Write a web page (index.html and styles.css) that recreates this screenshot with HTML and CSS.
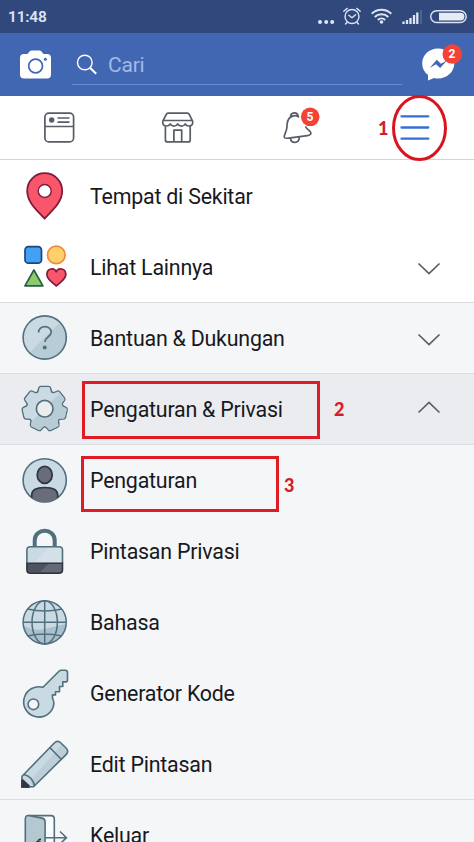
FILE: index.html
```html
<!DOCTYPE html>
<html lang="id">
<head>
<meta charset="utf-8">
<title>Menu</title>
<link rel="stylesheet" href="styles.css">
</head>
<body>
<div class="screen">
  <header class="status">
    <span class="clock">11:48</span>
    <svg class="status-icons" width="174" height="33" viewBox="300 0 174 33" fill="none" stroke="#dce5f4">
      <g fill="#dce5f4" stroke="none"><circle cx="320" cy="22" r="2"/><circle cx="326.2" cy="22" r="2"/><circle cx="332.2" cy="22" r="2"/></g>
      <g stroke-width="1.4" stroke-linecap="round" stroke-linejoin="round"><circle cx="352" cy="16.5" r="7"/><path d="M348.8 15.3l3.2 2.4 3.6-3M343.8 11.2l3.4-2.8M360.2 11.2l-3.4-2.8M347 22.5l-1.5 1.6M357 22.5l1.5 1.6"/></g>
      <g stroke-width="2"><path d="M371.7 13.8a14 14 0 0 1 19.6 0M374.7 17a9.7 9.7 0 0 1 13.6 0M377.8 20a5.4 5.4 0 0 1 7.4 0"/></g>
      <circle cx="381.5" cy="22" r="1.8" fill="#dce5f4" stroke="none"/>
      <path d="M403.5 24v-2.5M407 24v-4M410.5 24v-6M414 24v-9M417.3 24v-11.500" stroke-width="2.3"/>
      <path d="M421 24v-14" stroke="#536b9c" stroke-width="1.5"/>
      <rect x="430.700" y="10.700" width="35.500" height="11.800" rx="5.900" stroke-width="1.400"/>
      <path d="M439 12.700h21.500a3.900 3.900 0 0 1 0 7.800H439z" fill="#e6ecf6" stroke="none"/>
    </svg>
  </header>

  <div class="topbar">
    <svg class="camera" width="72" height="63" viewBox="0 33 72 63">
      <path d="M24 54h3.500l2-2.500q.8-.9 2-.9h8q1.200 0 2 .9l2 2.500H47q4 0 4 4v16.500q0 4-4 4H24q-4 0-4-4V58q0-4 4-4z" fill="#fff"/>
      <circle cx="35.600" cy="66" r="6.900" fill="none" stroke="#4267b2" stroke-width="1.700"/><circle cx="45.400" cy="59.300" r="1.500" fill="#4267b2"/>
    </svg>
    <div class="search">
      <svg width="36" height="51" viewBox="72 33 36 51" fill="none" stroke="#fff"><circle cx="84.800" cy="62.500" r="7.300" stroke-width="1.400"/><path d="M90 67.800l6.200 6" stroke-width="2.100"/></svg>
      <span>Cari</span>
    </div>
    <svg class="messenger" width="72" height="63" viewBox="402 33 72 63">
      <path d="M438 48.500c9 0 16.300 6.600 16.300 14.900S447 78.400 438 78.400q-2 0-4-.5l-6 2.500v-5.500c-3.600-2.700-5.800-6.800-5.800-11.500 0-8.300 7-14.900 15.800-14.900z" fill="#fff"/>
      <path d="M429.600 68l7.200-8.200 4.100 3.900 6-3.300-6.700 7.700-4.200-3.900z" fill="#4267b2"/>
      <circle cx="452.300" cy="54" r="9.800" fill="#f44336"/>
    </svg>
    <span class="badge badge-messages">2</span>
  </div>

  <nav class="tabs">
    <svg width="118" height="63" viewBox="0 96 118 63" fill="none" stroke="#575c65" stroke-width="1.700"><rect x="44.900" y="113.200" width="28.700" height="28.700" rx="4"/><path d="M45 126.500h28.500M57.500 118h12M57.500 122.200h12"/><circle cx="51.700" cy="120" r="2.700" fill="#575c65" stroke="none"/></svg>
    <svg width="119" height="63" viewBox="118 96 119 63" fill="none" stroke="#575c65" stroke-width="1.700" stroke-linejoin="round"><path d="M168 113.200h19.500q1.300 0 1.700 1.200l3.500 7q.3 4.600-3.800 4.600-2.600 0-3.700-2.100-1.200 2.300-3.800 2.300t-3.700-2.300q-1.200 2.300-3.800 2.300t-3.700-2.300q-1.100 2.100-3.700 2.100-4 0-3.800-4.600l3.600-7q.4-1.200 1.700-1.200zM163 120.500h29.500M165.400 126v13.900q0 2 2 2h20.800q2 0 2-2V126M173.900 141.500v-11.300h7.800v11.300"/></svg>
    <svg width="118" height="63" viewBox="237 96 118 63" fill="none" stroke="#575c65" stroke-width="1.700" stroke-linecap="round" stroke-linejoin="round"><path d="M298.500 116.800c-2.300-1.600-5.800-1.300-8.400.7-3.200 2.400-3.100 6.500-3.200 10-.2 4.200-3.400 7.500-2.500 10 .6 1.400 3.500.7 6 .4l17-2.300c3-.4 4.500-1.900 2.900-3.900-1.500-1.800-3.500-2.400-4.600-4.700M290.500 116.500c.5-4.400 6.300-5 7.500-1M290.500 138.500c.2 5.400 8.500 5 8.700-.8"/><circle cx="310.200" cy="116.800" r="9.300" fill="#f44336" stroke="none"/></svg>
    <svg width="119" height="63" viewBox="355 96 119 63" stroke="#3470d4" stroke-width="2.300" stroke-linecap="round"><path d="M401.500 116.300h26.800M401.500 127.500h26.800M401.500 138.700h26.800"/></svg>
    <span class="badge badge-alerts">5</span>
  </nav>

  <main class="menu">
    <div class="row plain">
      <svg class="icon" viewBox="0 160 90 71"><path d="M44.600 218.600C37.700 211 27.200 202.500 27.200 191a17.500 17.800 0 0 1 35 0c0 11.500-10.500 20-17.600 27.600z" fill="#f8566b" stroke="#801b3b" stroke-width="1.800" stroke-linejoin="round"/><circle cx="44.700" cy="191" r="6.500" fill="#fff" stroke="#801b3b" stroke-width="1.400"/></svg>
      <span>Tempat di Sekitar</span>
    </div>
    <div class="row plain">
      <svg class="icon" viewBox="0 231 90 71" stroke-width="1.700" stroke-linejoin="round"><rect x="25" y="246.700" width="16.500" height="16.500" rx="3.500" fill="#42a0f5" stroke="#1d477b"/><circle cx="56.300" cy="254.900" r="8.800" fill="#ffd06b" stroke="#ef8c3c"/><path d="M33.900 270l9 15.800h-18z" fill="#8cca6b" stroke="#285f43"/><path d="M56.200 286C52 282 46.900 279.500 46.900 274.500c0-6.500 7.500-7.300 9.300-2.700 1.800-4.600 9.600-3.800 9.600 2.700 0 5-5.400 7.500-9.600 11.500z" fill="#f8566b" stroke="#801b3b"/></svg>
      <span>Lihat Lainnya</span>
      <svg class="chevron" viewBox="0 0 24 14"><path d="M1.500 1.500L12 11.500 22.500 1.500"/></svg>
    </div>
    <div class="row line">
      <svg class="icon" viewBox="0 302 90 71"><circle cx="44.700" cy="337.500" r="21.600" fill="#c9dae2"/><path d="M29.500 352.800A21.600 21.600 0 0 0 60 322.200z" fill="#b8ccd6"/><circle cx="44.700" cy="337.500" r="21.600" fill="none" stroke="#526f7e" stroke-width="1.600"/><path d="M38.500 332.500c0-8 13-7.600 12.700-.2-.2 5-6.300 4.500-6.300 9.700" fill="none" stroke="#526f7e" stroke-width="1.700"/><circle cx="44.700" cy="347.500" r="2" fill="#526f7e"/></svg>
      <span>Bantuan &amp; Dukungan</span>
      <svg class="chevron" viewBox="0 0 24 14"><path d="M1.500 1.500L12 11.500 22.500 1.500"/></svg>
    </div>
    <div class="row line open">
      <svg class="icon" viewBox="0 373 90 71">
        <defs>
          <path id="tooth" d="M-8.500-14.500C-6.300-16-5.900-17.500-5.400-20.300Q-5.100-21.600-3.700-21.600H3.700Q5.100-21.600 5.400-20.300C5.900-17.500 6.300-16 8.500-14.500L0 0z"/>
          <g id="gear"><circle r="16.800"/><use href="#tooth"/><use href="#tooth" transform="rotate(51.430)"/><use href="#tooth" transform="rotate(102.860)"/><use href="#tooth" transform="rotate(154.290)"/><use href="#tooth" transform="rotate(205.710)"/><use href="#tooth" transform="rotate(257.140)"/><use href="#tooth" transform="rotate(308.570)"/></g>
          <clipPath id="shade"><path d="M-24 24L24-24V24z"/></clipPath>
        </defs>
        <g transform="translate(44.700 408.700)"><use href="#gear" fill="#526f7e" stroke="#526f7e" stroke-width="2.600" stroke-linejoin="round"/><use href="#gear" fill="#c9dae2"/><g clip-path="url(#shade)"><use href="#gear" fill="#b8ccd6"/></g><circle r="8.300" fill="#ebecf0" stroke="#526f7e" stroke-width="1.700"/></g>
      </svg>
      <span>Pengaturan &amp; Privasi</span>
      <svg class="chevron up" viewBox="0 0 24 14"><path d="M1.500 12.500L12 2.500 22.500 12.500"/></svg>
    </div>
    <div class="row line">
      <svg class="icon" viewBox="0 444 90 71"><defs><clipPath id="face"><circle cx="44.700" cy="480.300" r="22"/></clipPath></defs><circle cx="44.700" cy="480.300" r="21.600" fill="#c9dae2" stroke="#526f7e" stroke-width="1.600"/><g fill="#696d7a" stroke="#303641" stroke-width="1.700" clip-path="url(#face)"><path d="M31.700 506v-11c0-6 5-7.500 13-7.500s13 1.500 13 7.500v11z"/><ellipse cx="44.700" cy="474.900" rx="7.500" ry="8.500"/></g></svg>
      <span>Pengaturan</span>
    </div>
    <div class="row">
      <svg class="icon" viewBox="0 515 90 71"><path d="M34.700 547v-6.500c0-13 20-13 20 0v6.500" fill="none" stroke="#526f7e" stroke-width="4"/><rect x="26.900" y="546.800" width="35.600" height="26.500" rx="3.500" fill="#c9dae2"/><path d="M49 547h11q2.500 0 2.500 3v13H34z" fill="#d3e0e7"/><path d="M26.900 563.300h35.600v6.500q0 3.500-3.500 3.500H30.400q-3.500 0-3.500-3.500z" fill="#4e535f"/><path d="M49 563.300h13.500v9H40z" fill="#646975"/><path d="M26.900 563V550q0-3.200 3.500-3.200H59q3.500 0 3.500 3.200v13" fill="none" stroke="#526f7e" stroke-width="1.600"/><path d="M26.900 563.300h35.600v6.500q0 3.500-3.500 3.500H30.400q-3.500 0-3.500-3.500z" fill="none" stroke="#303641" stroke-width="1.600"/></svg>
      <span>Pintasan Privasi</span>
    </div>
    <div class="row">
      <svg class="icon" viewBox="0 586 90 71"><circle cx="44.700" cy="622.300" r="21.600" fill="#c9dae2"/><path d="M23.200 625.500q10 6 21 3.500t22-5a21.600 21.600 0 0 1-43 1.500z" fill="#a9c1cc"/><g fill="none" stroke="#526f7e" stroke-width="1.500"><circle cx="44.700" cy="622.300" r="21.600"/><ellipse cx="44.700" cy="622.300" rx="12.700" ry="21.600"/><path d="M44.700 600.700v43.200M23.100 622.300h43.200M27.500 609q17.200 4 34.400 0M27.500 636q17.200-4 34.400 0"/></g></svg>
      <span>Bahasa</span>
    </div>
    <div class="row">
      <svg class="icon" viewBox="0 657 90 71"><path d="M43 687.300L59.200 671q.8-.8 2-.8h4q2.300 0 2.300 2.300v7.400q0 2-2 2h-2.700v4.600h-3.300v5.200h-4v3.200h-3v3.300c1.500 2.800 1.700 6.500.3 9.800a15.200 15.200 0 1 1-9.800-20.700z" fill="#c9dae2" stroke="#526f7e" stroke-width="1.600" stroke-linejoin="round"/><circle cx="33.400" cy="704.300" r="5.300" fill="#f5f6f8" stroke="#526f7e" stroke-width="1.600"/></svg>
      <span>Generator Kode</span>
    </div>
    <div class="row">
      <svg class="icon" viewBox="0 728 90 71"><path d="M22 786.800v-10.500L54.300 743q3.300-3.200 6.600 0l5.200 5q3.200 3.300 0 6.600L33.500 786.800z" fill="#c9dae2"/><path d="M62 743.900l4.100 4.100q3.200 3.300 0 6.600L33.500 786.800l-4-5z" fill="#bccfd8"/><path d="M22 779.500l8 7.300h-8z" fill="#303641" stroke="#303641" stroke-width="1.700" stroke-linejoin="round"/><path d="M22 786.800v-10.500L54.300 743q3.300-3.200 6.600 0l5.200 5q3.200 3.300 0 6.600L33.500 786.800H29M50 747.700L61 759M24 774.500q9 2.500 10.500 11.500" fill="none" stroke="#526f7e" stroke-width="1.600"/><path d="M22 780v6.800h7" fill="none" stroke="#303641" stroke-width="1.700"/></svg>
      <span>Edit Pintasan</span>
    </div>
    <div class="row line last">
      <svg class="icon" viewBox="0 799 90 71"><path d="M29 815.600h22q3.300 0 3.300 3.300V858H30" fill="#fbfcfd" stroke="#526f7e" stroke-width="1.600"/><path d="M25.300 860v-41q0-4 4-3.400l12.800 2.500q3 .7 3 3.900v38z" fill="#b4c8d1" stroke="#526f7e" stroke-width="1.600"/><path d="M45 837.700h21M60 831.500l6.500 6.200-6.500 6.200" fill="none" stroke="#526f7e" stroke-width="1.600"/><path d="M41 839.500q-3-.5-3 3v3M36 842h4.500" fill="none" stroke="#303641" stroke-width="1.700"/></svg>
      <span>Keluar</span>
    </div>
  </main>

  <svg class="ring" width="58" height="68" viewBox="0 0 58 68"><ellipse cx="29.500" cy="34" rx="26" ry="31.500" fill="none" stroke="#d9141f" stroke-width="3"/></svg>
  <div class="frame frame-privacy"></div>
  <div class="frame frame-settings"></div>
  <span class="mark mark-one">1</span>
  <span class="mark mark-two">2</span>
  <span class="mark mark-three">3</span>
</div>
</body>
</html>
```
FILE: styles.css
```css
* { box-sizing: border-box; }
body { margin: 0; overflow: hidden; font-family: Roboto, sans-serif; }
svg { display: block; flex: none; }
.screen { position: relative; width: 474px; height: 842px; overflow: hidden; background: #fff; }

.status { height: 33px; display: flex; align-items: center; justify-content: space-between; padding-left: 8px; background: #30487b; }
.clock { padding-top: 1px; color: #dce5f4; font-size: 15.500px; font-weight: 600; letter-spacing: -0.2px; line-height: 18px; }

.topbar { position: relative; height: 63px; display: flex; background: #4267b2; }
.search { flex: 1; height: 52px; display: flex; align-items: center; border-bottom: 1px solid #6a8bd3; }
.search svg { align-self: flex-start; }
.search span { padding-top: 12px; color: #a3b8e6; font-size: 21px; letter-spacing: -0.2px; line-height: 24px; }

.badge { position: absolute; width: 20px; text-align: center; color: #fff; font-weight: 700; font-size: 12px; line-height: 14px; }
.badge-messages { left: 442px; top: 14px; }
.badge-alerts { left: 300px; top: 14px; }

.tabs { position: relative; height: 64px; display: flex; border-bottom: 1px solid #d2d3d5; background: #fff; }

.row { height: 71px; display: flex; align-items: center; background: #f5f6f8; color: #18191d; font-size: 21.400px; letter-spacing: -0.220px; line-height: 26px; }
.row span { flex: 1; padding-top: 2px; white-space: nowrap; }
.plain { background: #fff; }
.line { box-shadow: inset 0 1px #dcdde0; }
.open { background: #ebecf0; }
.icon { width: 90px; height: 71px; }
.chevron { width: 24px; height: 14px; margin: 4px 33px 0 0; fill: none; stroke: #595d66; stroke-width: 1.700; }
.up { margin-top: -4px; }

.ring { position: absolute; left: 390px; top: 94px; }
.frame { position: absolute; border: 3px solid #e01b24; }
.frame-privacy { left: 82px; top: 381px; width: 238px; height: 58px; }
.frame-settings { left: 81px; top: 456px; width: 198px; height: 56px; }
.mark { position: absolute; color: #d51d2d; font: 900 18px/22px Lato, sans-serif; }
.mark-one { left: 378px; top: 117px; }
.mark-two { left: 334px; top: 398px; }
.mark-three { left: 284px; top: 474px; }
```
